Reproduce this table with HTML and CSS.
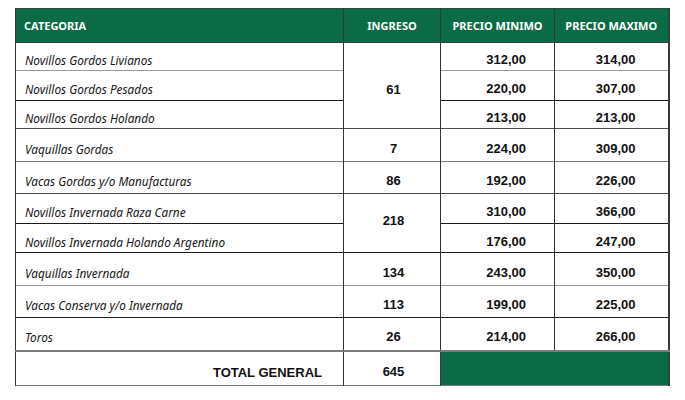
FILE: index.html
```html
<!DOCTYPE html>
<html lang="es">
<head>
<meta charset="utf-8">
<title>Ingresos y precios</title>
<link rel="stylesheet" href="styles.css">
</head>
<body>
<table class="grid">
  <colgroup>
    <col class="c-cat"><col class="c-ing"><col class="c-min"><col class="c-max">
  </colgroup>
  <thead>
    <tr class="head">
      <th class="h-cat">CATEGORIA</th>
      <th>INGRESO</th>
      <th>PRECIO MINIMO</th>
      <th>PRECIO MAXIMO</th>
    </tr>
  </thead>
  <tbody>
    <tr class="r1">
      <td class="cat">Novillos Gordos Livianos</td>
      <td class="ing span3" rowspan="3">61</td>
      <td class="num min">312,00</td>
      <td class="num max">314,00</td>
    </tr>
    <tr class="r2 l-light">
      <td class="cat">Novillos Gordos Pesados</td>
      <td class="num min">220,00</td>
      <td class="num max">307,00</td>
    </tr>
    <tr class="r3 l-black">
      <td class="cat">Novillos Gordos Holando</td>
      <td class="num min">213,00</td>
      <td class="num max">213,00</td>
    </tr>
    <tr class="r4 l-dark">
      <td class="cat">Vaquillas Gordas</td>
      <td class="ing">7</td>
      <td class="num min">224,00</td>
      <td class="num max">309,00</td>
    </tr>
    <tr class="r5 l-mid">
      <td class="cat">Vacas Gordas y/o Manufacturas</td>
      <td class="ing">86</td>
      <td class="num min">192,00</td>
      <td class="num max">226,00</td>
    </tr>
    <tr class="r6 l-dark">
      <td class="cat">Novillos Invernada Raza Carne</td>
      <td class="ing span2" rowspan="2">218</td>
      <td class="num min">310,00</td>
      <td class="num max">366,00</td>
    </tr>
    <tr class="r7 l-black">
      <td class="cat">Novillos Invernada Holando Argentino</td>
      <td class="num min">176,00</td>
      <td class="num max">247,00</td>
    </tr>
    <tr class="r8 l-black">
      <td class="cat">Vaquillas Invernada</td>
      <td class="ing">134</td>
      <td class="num min">243,00</td>
      <td class="num max">350,00</td>
    </tr>
    <tr class="r9 l-light">
      <td class="cat">Vacas Conserva y/o Invernada</td>
      <td class="ing">113</td>
      <td class="num min">199,00</td>
      <td class="num max">225,00</td>
    </tr>
    <tr class="r10 l-black">
      <td class="cat">Toros</td>
      <td class="ing">26</td>
      <td class="num min">214,00</td>
      <td class="num max">266,00</td>
    </tr>
    <tr class="total">
      <td class="total-label">TOTAL GENERAL</td>
      <td class="ing">645</td>
      <td class="fill" colspan="2"></td>
    </tr>
  </tbody>
</table>
</body>
</html>
```

FILE: styles.css
```css
html, body {
  margin: 0;
  padding: 0;
  background: #ffffff;
}

body {
  padding: 8px 0 0 15px;
}

.grid {
  border-collapse: collapse;
  table-layout: fixed;
  width: 654px;
  border-left: 1px solid #6e6e6e;
  border-right: 2px solid #3a3a3a;
  border-bottom: 1px solid #7a7a7a;
  font-family: "Liberation Sans", Arial, sans-serif;
  color: #111111;
}

.c-cat { width: 328px; }
.c-ing { width: 97px; }
.c-min { width: 114px; }
.c-max { width: 114px; }

.head {
  height: 34px;
  background: #0b6b47;
}

.head th {
  font-family: "Noto Sans", "DejaVu Sans", sans-serif;
  font-weight: 700;
  font-size: 11px;
  color: #ffffff;
  text-align: center;
  vertical-align: middle;
  padding: 0 0 1px 0;
  border-top: 1px solid #2d4a3c;
  border-bottom: 1px solid #3c3c3c;
  border-left: 1px solid #2a3d33;
}

.head th.h-cat {
  text-align: left;
  padding-left: 8px;
}

td {
  padding: 7px 0 0 0;
  border-left: 1px solid #333333;
  border-top: 1px solid #8a8a8a;
  vertical-align: middle;
  line-height: 14px;
}

.cat {
  font-family: "Noto Sans", "DejaVu Sans", sans-serif;
  font-style: italic;
  font-size: 11.8px;
  color: #161616;
  padding-left: 9px;
  white-space: nowrap;
}

.num {
  font-weight: 700;
  font-size: 13px;
  text-align: right;
}

.min { padding-right: 28px; }
.max { padding-right: 32px; }

.ing {
  font-weight: 700;
  font-size: 13px;
  text-align: center;
  padding-left: 3px;
}

.ing.span3 {
  padding-top: 9px;
}

.ing.span2 {
  padding-top: 0;
  padding-bottom: 4px;
}

.r1 { height: 28px; }
.r2 { height: 30px; }
.r3 { height: 28px; }
.r4 { height: 33px; }
.r5 { height: 32px; }
.r6 { height: 30px; }
.r7 { height: 29px; }
.r8 { height: 33px; }
.r9 { height: 32px; }
.r10 { height: 33px; }
.total { height: 35px; }

.l-light td { border-top-color: #9a9a9a; }
.l-mid td { border-top-color: #7a7a7a; }
.l-dark td { border-top-color: #4a4a4a; }
.l-black td { border-top-color: #1c1c1c; }

.total td {
  border-top: 2px solid #7c7c7c;
}

.total-label {
  font-weight: 700;
  font-size: 13px;
  text-align: right;
  padding-right: 21px;
  padding-top: 9px;
}

.fill {
  background: #0b6b47;
  border-left: 1px solid #3a3a3a;
}
```
